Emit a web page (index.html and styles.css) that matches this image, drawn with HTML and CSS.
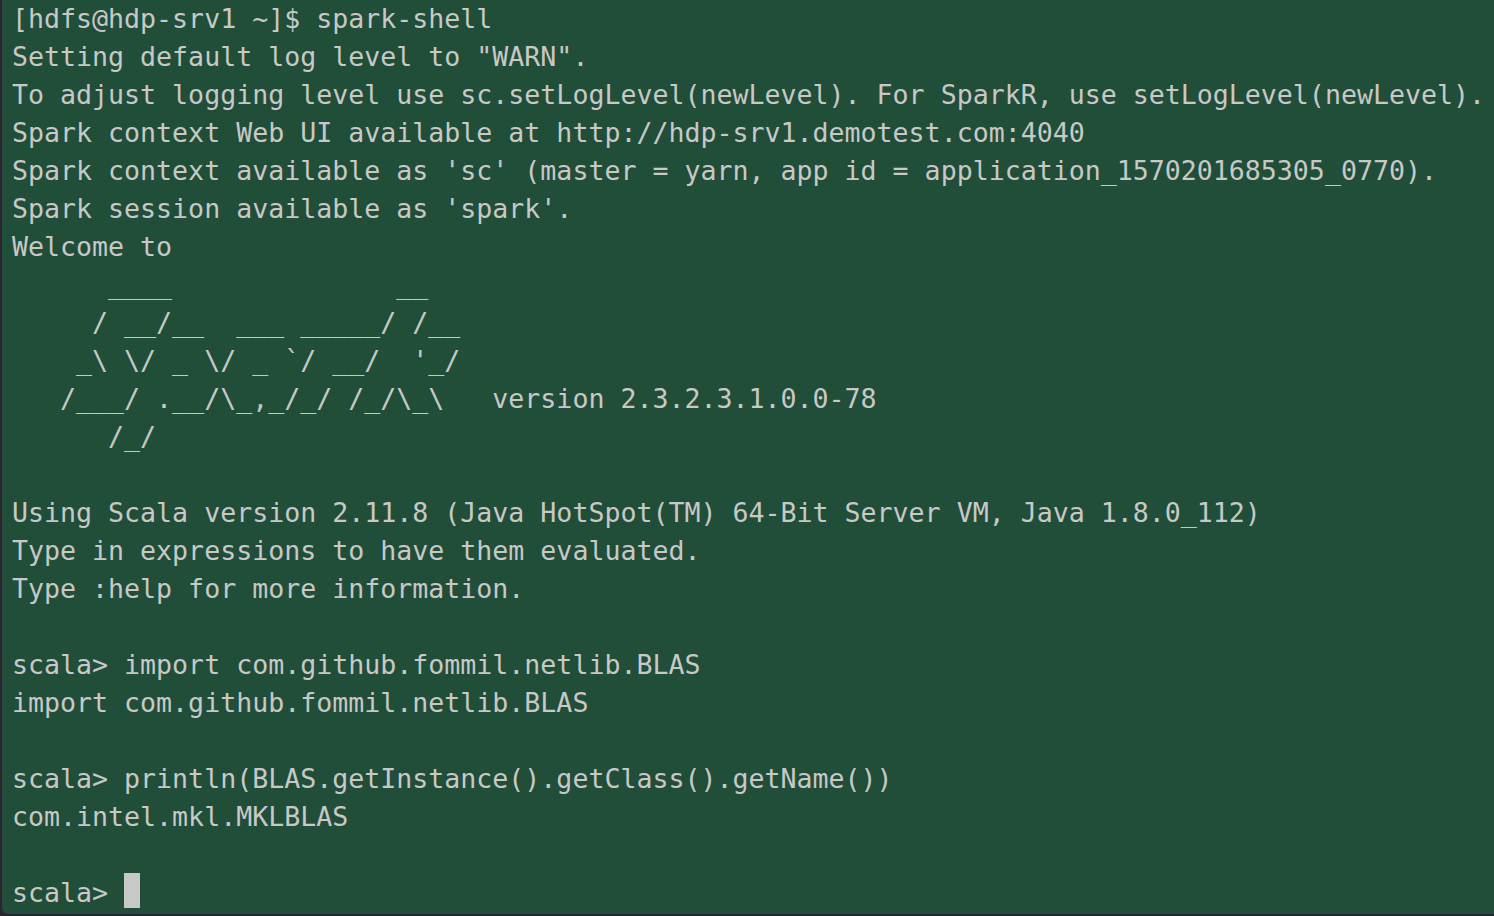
FILE: index.html
```html
<!DOCTYPE html>
<html>
<head>
<meta charset="utf-8">
<link rel="stylesheet" href="styles.css">
</head>
<body>
<div class="terminal">
<pre class="output">[hdfs@hdp-srv1 ~]$ spark-shell
Setting default log level to "WARN".
To adjust logging level use sc.setLogLevel(newLevel). For SparkR, use setLogLevel(newLevel).
Spark context Web UI available at http://hdp-srv1.demotest.com:4040
Spark context available as 'sc' (master = yarn, app id = application_1570201685305_0770).
Spark session available as 'spark'.
Welcome to
      ____              __
     / __/__  ___ _____/ /__
    _\ \/ _ \/ _ `/ __/  '_/
   /___/ .__/\_,_/_/ /_/\_\   version 2.3.2.3.1.0.0-78
      /_/

Using Scala version 2.11.8 (Java HotSpot(TM) 64-Bit Server VM, Java 1.8.0_112)
Type in expressions to have them evaluated.
Type :help for more information.

scala&gt; import com.github.fommil.netlib.BLAS
import com.github.fommil.netlib.BLAS

scala&gt; println(BLAS.getInstance().getClass().getName())
com.intel.mkl.MKLBLAS

scala&gt; <span class="cursor"> </span></pre>
</div>
</body>
</html>
```
FILE: styles.css
```css
html, body {
  margin: 0;
  padding: 0;
  background: #2a2433;
}
.terminal {
  box-sizing: border-box;
  height: 914px;
  margin-left: 2px;
  width: 1492px;
  background: #214e38;
  border-bottom-left-radius: 6px;
  overflow: hidden;
}
.output {
  margin: 0;
  padding: 0 0 0 10px;
  font-family: "DejaVu Sans Mono", monospace;
  font-size: 26.6px;
  line-height: 38px;
  color: #c8c8c8;
  white-space: pre;
}
.cursor {
  display: inline-block;
  width: 16px;
  height: 35px;
  background: #c8c8c8;
  vertical-align: -7px;
  position: relative;
  top: -8px;
}
```
